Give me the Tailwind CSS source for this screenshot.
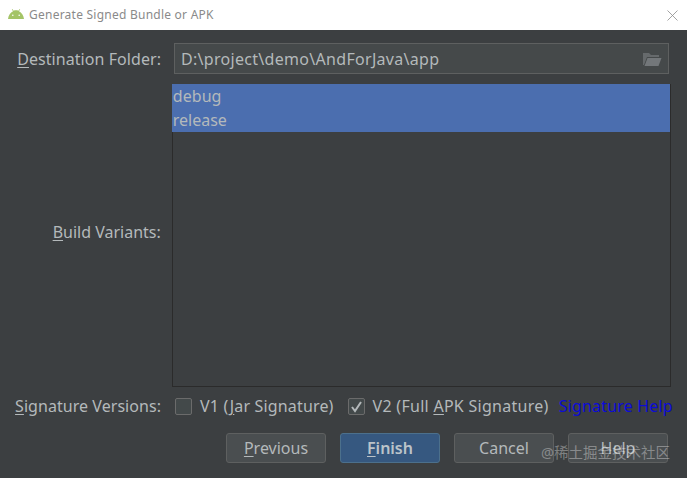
<!DOCTYPE html>
<html lang="en">
<head>
  <meta charset="UTF-8" />
  <title>Generate Signed Bundle or APK</title>
  <script src="https://cdn.jsdelivr.net/npm/@tailwindcss/browser@4"></script>
</head>
<body class="relative w-[687px] h-[478px] overflow-hidden bg-[#3c3f41] font-['Noto_Sans','Noto_Sans_CJK_SC',sans-serif] text-[16px] text-[#b4b9bb]">

  <!-- Title bar -->
  <div class="h-[30px] bg-white flex items-center pl-[8px] pr-[9px]">
    <svg class="w-[16px] h-[10px] mb-[2px]" viewBox="0 0 16 10">
      <path d="M0 10 C0.3 6.5 2.5 3.4 5 2.2 L3.8 0.2 L4.3 0 L5.6 1.8 C7.2 1.2 8.8 1.2 10.4 1.8 L11.7 0 L12.2 0.2 L11 2.2 C13.5 3.4 15.7 6.5 16 10 Z" fill="#a4c467"/>
      <circle cx="4.8" cy="6.2" r="0.8" fill="#fff"/>
      <circle cx="11.2" cy="6.2" r="0.8" fill="#fff"/>
    </svg>
    <span class="ml-[5px] text-[12px] text-[#8a8a8a] tracking-[0.24px]">Generate Signed Bundle or APK</span>
    <svg class="ml-auto w-[11px] h-[11px]" viewBox="0 0 11 11" fill="none" stroke="#8c8c8c" stroke-width="0.8">
      <path d="M0.5 0.5 L10.5 10.5 M10.5 0.5 L0.5 10.5"/>
    </svg>
  </div>

  <div class="flex flex-col pt-[13px] pl-[15px] pr-[16px]">
    <!-- Destination folder -->
    <div class="flex items-center h-[31px]">
      <label class="w-[146px] text-right tracking-[0.06px]"><span class="underline underline-offset-2">D</span>estination Folder:</label>
      <div class="ml-[13px] w-[495px] h-[31px] flex items-center justify-between bg-[#45494a] border border-[#5e6060] pl-[6px] pr-[6px]">
        <span class="tracking-[0.3px]">D:\project\demo\AndForJava\app</span>
        <svg class="w-[20px] h-[16px]" viewBox="0 0 20 16">
          <path d="M1 2 H7 L9 4 H17 V6 H5 L2 14 H1 Z" fill="#666a6c"/>
          <path d="M5.5 7 H19.5 L16.5 15 H2.5 Z" fill="#73777a"/>
        </svg>
      </div>
    </div>

    <!-- Build variants -->
    <div class="flex mt-[10px] h-[303px]">
      <label class="w-[146px] text-right mt-[136px]"><span class="underline underline-offset-2">B</span>uild Variants:</label>
      <div class="ml-[11px] w-[500px] h-[303px] bg-[#3c3f41] border-r border-b border-l border-[#2b2b2b]">
        <ul class="bg-[#4b6eaf] leading-[24px] -ml-px pl-[1px]">
          <li class="tracking-[0.06px]">debug</li>
          <li>release</li>
        </ul>
      </div>
    </div>

    <!-- Signature versions -->
    <div class="flex items-center mt-[7px] h-[24px] whitespace-nowrap">
      <label class="w-[146px] shrink-0 text-right tracking-[0.05px]"><span class="underline underline-offset-2">S</span>ignature Versions:</label>
      <span class="ml-[14px] w-[17px] h-[17px] shrink-0 rounded-[2px] bg-[#43494a] border border-[#6b6b6b]"></span>
      <span class="ml-[8px] shrink-0 tracking-[0.16px]">V1 (<span class="underline underline-offset-2">J</span>ar Signature)</span>
      <span class="ml-[14px] w-[17px] h-[17px] shrink-0 rounded-[2px] bg-[#43494a] border border-[#6b6b6b] flex items-center justify-center">
        <svg class="w-[13px] h-[13px]" viewBox="0 0 13 13" fill="none" stroke="#b4b9bb" stroke-width="2">
          <path d="M2 7 L5 11 L11 2"/>
        </svg>
      </span>
      <span class="ml-[8px] shrink-0 tracking-[0.28px]">V2 (Full <span class="underline underline-offset-2">A</span>PK Signature)</span>
      <a class="ml-[10px] shrink-0 text-[#0b0bd8] tracking-[0.18px]">Signature Help</a>
    </div>

    <!-- Buttons -->
    <div class="flex justify-end gap-[14px] mt-[15px] pr-[3px]">
      <button class="w-[100px] h-[30px] rounded-[3px] pb-[1px] bg-[#4a4e50] border border-[#5e6060]"><span class="underline underline-offset-2">P</span>revious</button>
      <button class="w-[100px] h-[30px] rounded-[3px] pb-[1px] bg-[#365880] border border-[#4c708c] font-semibold text-[#bbc3c9]"><span class="underline underline-offset-2">F</span>inish</button>
      <button class="w-[100px] h-[30px] rounded-[3px] pb-[1px] bg-[#4a4e50] border border-[#5e6060]">Cancel</button>
      <button class="w-[100px] h-[30px] rounded-[3px] pb-[1px] bg-[#4a4e50] border border-[#5e6060]">Help</button>
    </div>
  </div>

  <!-- Watermark -->
  <span class="absolute left-[541px] top-[442px] text-[14.5px] text-white/35">@稀土掘金技术社区</span>
</body>
</html>
